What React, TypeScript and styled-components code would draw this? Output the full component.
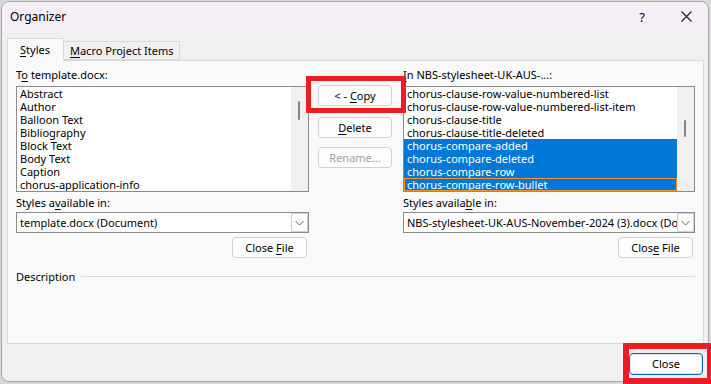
import React from 'react';
import styled, { createGlobalStyle } from 'styled-components';

const GlobalStyle = createGlobalStyle`
    html, body {
        margin: 0;
        padding: 0;
        background: #d8d8d8;
    }
    body {
        font-family: "Noto Sans", "Open Sans", sans-serif;
        font-size: 11px;
        color: #000;
    }
`;

const Screen = styled.div`
    width: 711px;
    height: 384px;
    padding: 1px 0 0 1px;
    box-sizing: border-box;
    overflow: hidden;
`;

const Window = styled.div`
    width: 708px;
    height: 381px;
    box-sizing: border-box;
    border: 1px solid #a8a8a8;
    border-radius: 8px;
    background: #f0f0f0;
    display: flex;
    flex-direction: column;
    position: relative;
`;

const TitleBar = styled.div`
    height: 29px;
    background: #f6eef6;
    border-radius: 8px 8px 0 0;
    display: flex;
    align-items: center;
    padding-left: 8px;
    flex-shrink: 0;
`;

const Title = styled.div`
    flex: 1;
    font-size: 12px;
`;

const TitleButton = styled.div`
    width: 44px;
    height: 29px;
    display: flex;
    align-items: center;
    justify-content: center;
    font-size: 13px;
`;

const Body = styled.div`
    flex: 1;
    padding: 7px 4px 0 5px;
    display: flex;
    flex-direction: column;
`;

const TabRow = styled.div`
    display: flex;
    align-items: flex-end;
    height: 22px;
    position: relative;
    z-index: 1;
`;

const Tab = styled.div<{ $active?: boolean }>`
    height: ${p => (p.$active ? 23 : 19)}px;
    margin-bottom: ${p => (p.$active ? -1 : 0)}px;
    padding: 0 ${p => (p.$active ? 13 : 6)}px 0 ${p => (p.$active ? 12 : 6)}px;
    box-sizing: border-box;
    line-height: ${p => (p.$active ? 21 : 18)}px;
    white-space: nowrap;
    background: ${p => (p.$active ? '#f9f9f9' : '#f0f0f0')};
    border: 1px solid #d9d9d9;
    border-bottom: ${p => (p.$active ? 'none' : '1px solid #d9d9d9')};
    border-left: ${p => (p.$active ? '1px solid #d9d9d9' : 'none')};
    font-size: 11px;
`;

const Panel = styled.div`
    height: 284px;
    box-sizing: border-box;
    background: #f9f9f9;
    border: 1px solid #d9d9d9;
    padding: 5px 0 0 8px;
    display: flex;
    flex-direction: column;
`;

const Columns = styled.div`
    display: grid;
    grid-template-columns: 293px 94px 292px;
`;

const Column = styled.div`
    display: flex;
    flex-direction: column;
`;

const Label = styled.div`
    height: 18px;
    line-height: 18px;
    white-space: nowrap;
    margin-bottom: 2px;
`;

const U = styled.span`
    text-decoration: underline;
    text-underline-offset: 2px;
`;

const ListBox = styled.div`
    height: 106px;
    box-sizing: border-box;
    border: 1px solid #8b8b8b;
    background: #fff;
    display: flex;
`;

const ListItems = styled.div`
    flex: 1;
    overflow: hidden;
`;

const ListItem = styled.div<{ $selected?: boolean; $focused?: boolean }>`
    height: 13px;
    line-height: 13px;
    padding-left: 3px;
    white-space: nowrap;
    box-sizing: border-box;
    background: ${p => (p.$selected ? '#0078d7' : 'transparent')};
    color: ${p => (p.$selected ? '#fff' : '#000')};
    outline: ${p => (p.$focused ? '1px solid #f2902a' : 'none')};
    outline-offset: -1px;
`;

const ScrollLane = styled.div`
    width: 17px;
    background: #f0f0f0;
    position: relative;
`;

const Thumb = styled.div`
    position: absolute;
    left: 7px;
    width: 2px;
    background: #858585;
    border-radius: 1px;
`;

const ButtonStack = styled.div`
    display: flex;
    flex-direction: column;
    align-items: flex-start;
    padding: 19px 0 0 9px;
`;

const Button = styled.div<{ $disabled?: boolean; $gap?: number; $width?: number }>`
    width: ${p => p.$width ?? 74}px;
    height: 21px;
    box-sizing: border-box;
    margin-top: ${p => p.$gap ?? 0}px;
    border: 1px solid #d0d0d0;
    border-radius: 4px;
    background: #fdfdfd;
    text-align: center;
    line-height: 19px;
    color: ${p => (p.$disabled ? '#a0a0a0' : '#000')};
    white-space: nowrap;
`;

const Highlight = styled.div<{ $t: number; $r: number; $b: number; $l: number; $w: number }>`
    position: relative;
    align-self: flex-start;
    &::after {
        content: '';
        position: absolute;
        top: ${p => p.$t}px;
        right: ${p => p.$r}px;
        bottom: ${p => p.$b}px;
        left: ${p => p.$l}px;
        border: ${p => p.$w}px solid #ec1c24;
        z-index: 5;
        pointer-events: none;
    }
`;

const Combo = styled.div`
    height: 21px;
    box-sizing: border-box;
    border: 1px solid #8b8b8b;
    background: #fff;
    display: flex;
    overflow: hidden;
`;

const ComboText = styled.div`
    flex: 1;
    padding-left: 3px;
    line-height: 19px;
    white-space: nowrap;
    overflow: hidden;
`;

const ComboArrow = styled.div`
    width: 17px;
    box-sizing: border-box;
    border: 1px solid #cfcfcf;
    background: #fff;
    display: flex;
    align-items: center;
    justify-content: center;
`;

const ButtonRow = styled.div`
    display: flex;
    justify-content: flex-end;
    padding: 4px 2px 0 0;
`;

const DescriptionRow = styled.div`
    display: flex;
    align-items: center;
    margin-top: 11px;
    width: 679px;
    gap: 6px;
`;

const Rule = styled.div`
    flex: 1;
    height: 1px;
    background: #d9d9d9;
`;

const Footer = styled.div`
    display: flex;
    justify-content: flex-end;
    padding: 9px 1px 0 0;
`;

const DefaultButton = styled(Button)`
    height: 22px;
    line-height: 20px;
    border: 1px solid #0067c0;
    box-shadow: inset 0 0 0 1px #dde9f6;
    background: #fdfdfd;
`;

const Chevron = () => (
    <svg width="9" height="6" viewBox="0 0 9 6">
        <path d="M0.5 1 L4.5 5 L8.5 1" fill="none" stroke="#606060" strokeWidth="1" />
    </svg>
);

const CloseIcon = () => (
    <svg width="11" height="11" viewBox="0 0 11 11">
        <path d="M0.5 0.5 L10.5 10.5 M10.5 0.5 L0.5 10.5" stroke="#1a1a1a" strokeWidth="1.1" />
    </svg>
);

const leftItems = ['Abstract', 'Author', 'Balloon Text', 'Bibliography', 'Block Text', 'Body Text', 'Caption', 'chorus-application-info'];

const rightItems = [
    { name: 'chorus-clause-row-value-numbered-list' },
    { name: 'chorus-clause-row-value-numbered-list-item' },
    { name: 'chorus-clause-title' },
    { name: 'chorus-clause-title-deleted' },
    { name: 'chorus-compare-added', selected: true },
    { name: 'chorus-compare-deleted', selected: true },
    { name: 'chorus-compare-row', selected: true },
    { name: 'chorus-compare-row-bullet', selected: true, focused: true },
];

const App = () => {
    return (
        <Screen>
            <GlobalStyle />
            <Window>
                <TitleBar>
                    <Title>Organizer</Title>
                    <TitleButton>?</TitleButton>
                    <TitleButton><CloseIcon /></TitleButton>
                </TitleBar>
                <Body>
                    <TabRow>
                        <Tab $active><U>S</U>tyles</Tab>
                        <Tab><U>M</U>acro Project Items</Tab>
                    </TabRow>
                    <Panel>
                        <Columns>
                            <Column>
                                <Label>T<U>o</U> template.docx:</Label>
                                <ListBox>
                                    <ListItems>
                                        {leftItems.map(item => <ListItem key={item}>{item}</ListItem>)}
                                    </ListItems>
                                    <ScrollLane>
                                        <Thumb style={{ top: 14, height: 19 }} />
                                    </ScrollLane>
                                </ListBox>
                                <Label style={{ marginTop: 2, marginBottom: 0 }}>Styles a<U>v</U>ailable in:</Label>
                                <Combo>
                                    <ComboText>template.docx (Document)</ComboText>
                                    <ComboArrow><Chevron /></ComboArrow>
                                </Combo>
                                <ButtonRow>
                                    <Button $width={75}>Close <U>F</U>ile</Button>
                                </ButtonRow>
                            </Column>
                            <ButtonStack>
                                <Highlight $t={-9} $r={-14} $b={-7} $l={-12} $w={5}>
                                    <Button>&lt; - <U>C</U>opy</Button>
                                </Highlight>
                                <Button $gap={11}><U>D</U>elete</Button>
                                <Button $gap={9} $disabled>Rename...</Button>
                            </ButtonStack>
                            <Column>
                                <Label><U>I</U>n NBS-stylesheet-UK-AUS-...:</Label>
                                <ListBox>
                                    <ListItems>
                                        {rightItems.map(item => (
                                            <ListItem key={item.name} $selected={item.selected} $focused={item.focused}>
                                                {item.name}
                                            </ListItem>
                                        ))}
                                    </ListItems>
                                    <ScrollLane>
                                        <Thumb style={{ top: 33, height: 17 }} />
                                    </ScrollLane>
                                </ListBox>
                                <Label style={{ marginTop: 2, marginBottom: 0 }}>Styles availa<U>b</U>le in:</Label>
                                <Combo>
                                    <ComboText>NBS-stylesheet-UK-AUS-November-2024 (3).docx (Document)</ComboText>
                                    <ComboArrow><Chevron /></ComboArrow>
                                </Combo>
                                <ButtonRow>
                                    <Button $width={75}>Clos<U>e</U> File</Button>
                                </ButtonRow>
                            </Column>
                        </Columns>
                        <DescriptionRow>
                            <span>Description</span>
                            <Rule />
                        </DescriptionRow>
                    </Panel>
                    <Footer>
                        <Highlight $t={-10} $r={-10} $b={-9} $l={-6} $w={6}>
                            <DefaultButton>Close</DefaultButton>
                        </Highlight>
                    </Footer>
                </Body>
            </Window>
        </Screen>
    );
};

export default App;
